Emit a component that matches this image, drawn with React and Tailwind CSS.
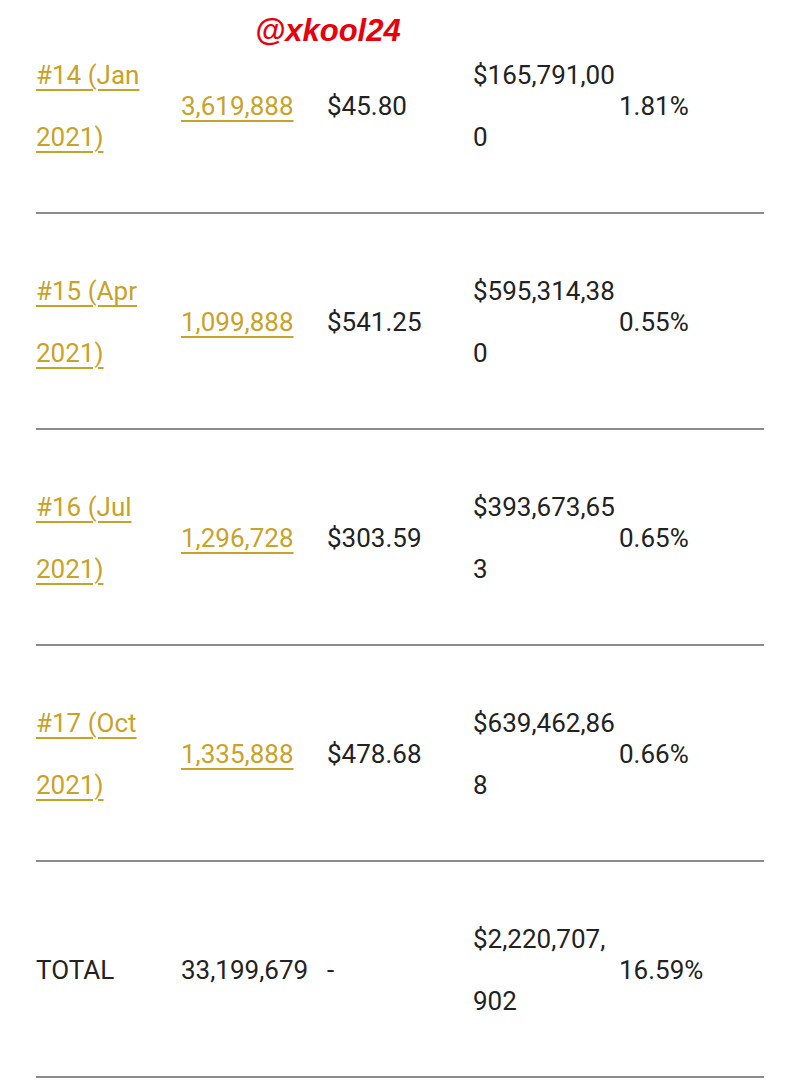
const rows = [
  { round: "#14 (Jan 2021)", shares: "3,619,888", price: "$45.80", amount: "$165,791,000", pct: "1.81%" },
  { round: "#15 (Apr 2021)", shares: "1,099,888", price: "$541.25", amount: "$595,314,380", pct: "0.55%" },
  { round: "#16 (Jul 2021)", shares: "1,296,728", price: "$303.59", amount: "$393,673,653", pct: "0.65%" },
  { round: "#17 (Oct 2021)", shares: "1,335,888", price: "$478.68", amount: "$639,462,868", pct: "0.66%" },
];

const link = "text-[#c9a227] underline decoration-[#c9a227] decoration-[1.5px] underline-offset-[5px]";

function Row({ children }) {
  return (
    <div className="grid grid-cols-[145px_146px_146px_146px_1fr] items-center border-b-2 border-[#8c8c8c] pt-[46px] pb-[44px]">
      {children}
    </div>
  );
}

export default function App() {
  return (
    <div className="relative min-h-[1080px] bg-white font-['Roboto',sans-serif] text-[26px] leading-[62px] text-[#222]">
      <div className="absolute left-[255px] top-[15px] font-['Liberation_Sans',sans-serif] text-[31px] font-bold italic leading-[36px] text-[#e8000b]">
        @xkool24
      </div>
      <div className="-mt-[2px] px-[36px]">
        {rows.map((r) => (
          <Row key={r.round}>
            <div className="pr-2"><span className={link}>{r.round}</span></div>
            <div><span className={link}>{r.shares}</span></div>
            <div>{r.price}</div>
            <div className="break-all">{r.amount}</div>
            <div>{r.pct}</div>
          </Row>
        ))}
        <Row>
          <div>TOTAL</div>
          <div>33,199,679</div>
          <div>-</div>
          <div className="break-all">$2,220,707,902</div>
          <div>16.59%</div>
        </Row>
      </div>
    </div>
  );
}
